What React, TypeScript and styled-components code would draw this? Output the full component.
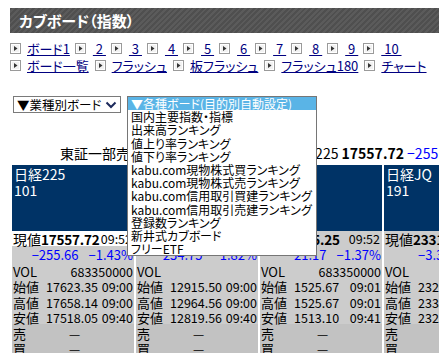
import styled, { createGlobalStyle } from 'styled-components';

const GlobalStyle = createGlobalStyle`
  html, body {
    margin: 0;
    padding: 0;
    overflow: hidden;
    background: #fff;
  }
  body {
    font-family: "Noto Sans CJK JP", "Noto Sans", sans-serif;
    font-feature-settings: "palt";
    color: #000;
  }
`;

const Page = styled.div`
  position: relative;
  width: 439px;
  height: 353px;
  overflow: hidden;
  box-sizing: border-box;
  padding: 8px 0 0 10px;
`;

const TitleBar = styled.div`
  height: 25px;
  padding-left: 9px;
  background: repeating-linear-gradient(135deg, #4f4f4f 0 2px, #5b5b5b 2px 4px);
  color: #fff;
  font-size: 15px;
  font-weight: bold;
  line-height: 25px;
  white-space: nowrap;
`;

const LinkRows = styled.div`
  margin-top: 7px;
  font-size: 13px;
`;

const LinkRow = styled.div`
  display: flex;
  align-items: center;
  height: 17px;
  white-space: nowrap;
`;

const NavItem = styled.span<{ $wide?: boolean }>`
  display: inline-flex;
  align-items: center;
  margin-right: ${(p) => (p.$wide ? 6 : 5)}px;
`;

const NavLink = styled.a<{ $num?: boolean }>`
  color: #000080;
  text-decoration: underline;
  margin-left: ${(p) => (p.$num ? 7 : 6)}px;
  line-height: 17px;
`;

const SelectRow = styled.div`
  display: flex;
  gap: 6px;
  height: 17px;
  margin: 22px 0 0 3px;
`;

const SelectBox = styled.div`
  width: 108px;
  height: 17px;
  box-sizing: border-box;
  border: 1px solid #7a7a7a;
  display: flex;
  align-items: center;
  justify-content: space-between;
  padding: 0 3px 0 3px;
  font-size: 12.5px;
  white-space: nowrap;
`;

const ListAnchor = styled.div`
  position: relative;
  width: 190px;
`;

const ListBox = styled.ul`
  position: absolute;
  top: 0;
  left: 0;
  z-index: 10;
  width: 190px;
  box-sizing: border-box;
  margin: 0;
  padding: 0;
  list-style: none;
  background: #fff;
  border: 1px solid #767676;
  font-size: 12px;
`;

const ListItem = styled.li<{ $active?: boolean }>`
  height: 13.2px;
  line-height: 13.2px;
  padding-left: 3px;
  white-space: nowrap;
  background: ${(p) => (p.$active ? '#5ab4e6' : 'transparent')};
  color: ${(p) => (p.$active ? '#fff' : '#000')};
`;

const InfoLine = styled.div`
  margin-top: 31px;
  height: 18px;
  line-height: 18px;
  padding-left: 50px;
  font-size: 14px;
  white-space: nowrap;
`;

const Strong = styled.b`
  font-weight: bold;
`;

const Minus = styled.span`
  color: #0000ff;
`;

const CardRow = styled.div`
  display: flex;
  gap: 2px;
  margin: 3px 0 0 2px;
`;

const Card = styled.div`
  flex: 0 0 122px;
  width: 122px;
  overflow: hidden;
  background: #cccccc;
  font-size: 12.5px;
  white-space: nowrap;
`;

const CardHead = styled.div`
  height: 66px;
  box-sizing: border-box;
  padding: 1px 0 0 2px;
  background: #003366;
  color: #fff;
  font-size: 14px;
  line-height: 16px;
`;

const PriceRow = styled.div<{ $flash?: boolean }>`
  height: 15px;
  display: flex;
  align-items: center;
  padding: 0 2px 0 1px;
  background: ${(p) => (p.$flash ? '#ffffff' : '#cccccc')};
  font-size: 14px;
`;

const PriceValue = styled.b`
  font-weight: bold;
  font-size: 13.5px;
  letter-spacing: -0.2px;
`;

const PriceTime = styled.span`
  margin-left: auto;
  font-size: 12.5px;
`;

const ChangeRow = styled.div`
  height: 16px;
  display: flex;
  align-items: center;
  justify-content: flex-end;
  gap: 10px;
  padding-right: 1px;
  color: #0000ff;
  font-size: 13px;
`;

const DataRow = styled.div<{ $dark?: boolean }>`
  height: 15.4px;
  display: grid;
  grid-template-columns: 33px 1fr auto;
  align-items: center;
  padding: 0 1px 0 1px;
  background: ${(p) => (p.$dark ? '#c2c2c2' : '#cccccc')};
`;

const Label = styled.span`
  font-size: 13px;
`;

const Wide = styled.span<{ $align: 'right' | 'center' }>`
  grid-column: 2 / 4;
  text-align: ${(p) => p.$align};
  padding-right: ${(p) => (p.$align === 'center' ? 30 : 0)}px;
`;

const ArrowBox = () => (
  <svg width="11" height="11" viewBox="0 0 11 11">
    <rect x="0.5" y="0.5" width="10" height="10" fill="#f2f2f2" stroke="#9a9a9a" />
    <rect x="1.5" y="1.5" width="8" height="8" fill="none" stroke="#ffffff" />
    <path d="M4 3 L7.5 5.5 L4 8 Z" fill="#333" />
  </svg>
);

const Chevron = () => (
  <svg width="12" height="8" viewBox="0 0 12 8">
    <polyline points="1.5,1.5 6,6 10.5,1.5" fill="none" stroke="#1c2a5c" strokeWidth="2" />
  </svg>
);

const row1 = ['ボード1', '2', '3', '4', '5', '6', '7', '8', '9', '10'];
const row2 = ['ボード一覧', 'フラッシュ', '板フラッシュ', 'フラッシュ180', 'チャート'];

const options = [
  '国内主要指数・指標',
  '出来高ランキング',
  '値上り率ランキング',
  '値下り率ランキング',
  'kabu.com現物株式買ランキング',
  'kabu.com現物株式売ランキング',
  'kabu.com信用取引買建ランキング',
  'kabu.com信用取引売建ランキング',
  '登録数ランキング',
  '新井式カブボード',
  'フリーETF',
];

type Board = {
  name: string;
  code: string;
  price: string;
  time: string;
  chg: string;
  pct: string;
  vol: string;
  open: [string, string];
  high: [string, string];
  low: [string, string];
  flash?: boolean;
};

const boards: Board[] = [
  { name: '日経225', code: '101', price: '17557.72', time: '09:52', chg: '−255.66', pct: '−1.43%', vol: '683350000', open: ['17623.35', '09:00'], high: ['17658.14', '09:00'], low: ['17518.05', '09:40'], flash: true },
  { name: 'JPX日経400', code: '160', price: '12680.75', time: '09:52', chg: '−234.75', pct: '−1.82%', vol: '', open: ['12915.50', '09:00'], high: ['12964.56', '09:00'], low: ['12819.56', '09:40'] },
  { name: 'TOPIX', code: '151', price: '1515.25', time: '09:52', chg: '−21.17', pct: '−1.37%', vol: '683350000', open: ['1525.67', '09:01'], high: ['1525.67', '09:01'], low: ['1513.10', '09:41'] },
  { name: '日経JQ', code: '191', price: '2331.20', time: '09:52', chg: '−3.35', pct: '−0.14%', vol: '', open: ['2329.85', '09:00'], high: ['2335.76', '09:02'], low: ['2325.04', '09:31'] },
];

function BoardCard({ b }: { b: Board }) {
  return (
    <Card>
      <CardHead>
        <div>{b.name}</div>
        <div>{b.code}</div>
      </CardHead>
      <PriceRow $flash={b.flash}>
        現値<PriceValue>{b.price}</PriceValue>
        <PriceTime>{b.time}</PriceTime>
      </PriceRow>
      <ChangeRow>
        <span>{b.chg}</span>
        <span>{b.pct}</span>
      </ChangeRow>
      <DataRow>
        <Label>VOL</Label>
        <Wide $align="right">{b.vol}</Wide>
      </DataRow>
      <DataRow>
        <Label>始値</Label>
        <span>{b.open[0]}</span>
        <span>{b.open[1]}</span>
      </DataRow>
      <DataRow>
        <Label>高値</Label>
        <span>{b.high[0]}</span>
        <span>{b.high[1]}</span>
      </DataRow>
      <DataRow>
        <Label>安値</Label>
        <span>{b.low[0]}</span>
        <span>{b.low[1]}</span>
      </DataRow>
      <DataRow $dark>
        <Label>売</Label>
        <Wide $align="center">—</Wide>
      </DataRow>
      <DataRow $dark>
        <Label>買</Label>
        <Wide $align="center">—</Wide>
      </DataRow>
    </Card>
  );
}

export default function App() {
  return (
    <>
      <GlobalStyle />
      <Page>
        <TitleBar>カブボード（指数）</TitleBar>
        <LinkRows>
          <LinkRow>
            {row1.map((t, i) => (
              <NavItem key={t}>
                <ArrowBox />
                <NavLink href="#" $num={i > 0}>
                  {i > 0 ? `\u00a0${t}\u00a0` : t}
                </NavLink>
              </NavItem>
            ))}
          </LinkRow>
          <LinkRow>
            {row2.map((t) => (
              <NavItem key={t} $wide>
                <ArrowBox />
                <NavLink href="#">{t}</NavLink>
              </NavItem>
            ))}
          </LinkRow>
        </LinkRows>
        <SelectRow>
          <SelectBox>
            <span>▼業種別ボード</span>
            <Chevron />
          </SelectBox>
          <ListAnchor>
            <ListBox>
              <ListItem $active>▼各種ボード(目的別自動設定)</ListItem>
              {options.map((o) => (
                <ListItem key={o}>{o}</ListItem>
              ))}
            </ListBox>
          </ListAnchor>
        </SelectRow>
        <InfoLine>
          東証一部売買代金 1兆2118億円　　 日経225 <Strong>17557.72</Strong> <Minus>−255.66</Minus>
        </InfoLine>
        <CardRow>
          {boards.map((b) => (
            <BoardCard key={b.name} b={b} />
          ))}
        </CardRow>
      </Page>
    </>
  );
}
